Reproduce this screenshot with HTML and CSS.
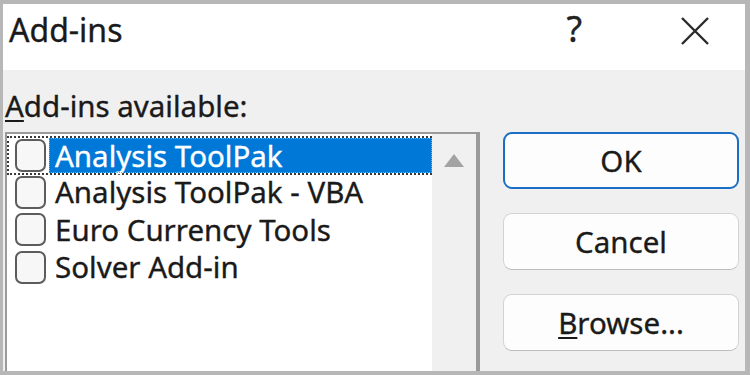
FILE: index.html
```html
<!DOCTYPE html>
<html>
<head>
<meta charset="utf-8">
<link rel="stylesheet" href="styles.css">
</head>
<body>
<div class="dialog">
  <div class="titlebar">
    <div class="title">Add-ins</div>
    <div class="help">?</div>
    <svg class="close" width="30" height="30" viewBox="0 0 30 30"><path d="M2 2 L28 28 M28 2 L2 28" stroke="#2b2b2b" stroke-width="2.4" fill="none"/></svg>
  </div>
  <div class="content">
    <div class="left">
      <div class="label"><u>A</u>dd-ins available:</div>
      <div class="listbox">
        <div class="items">
          <div class="row focused"><span class="cb"></span><span class="txt sel">Analysis ToolPak</span></div>
          <div class="row"><span class="cb"></span><span class="txt">Analysis ToolPak - VBA</span></div>
          <div class="row"><span class="cb"></span><span class="txt">Euro Currency Tools</span></div>
          <div class="row"><span class="cb"></span><span class="txt">Solver Add-in</span></div>
        </div>
        <div class="scroll">
          <svg width="22" height="15" viewBox="0 0 22 15"><polygon points="11,1 21,14 1,14" fill="#a3a3a3"/></svg>
        </div>
      </div>
    </div>
    <div class="buttons">
      <div class="btn primary">OK</div>
      <div class="btn">Cancel</div>
      <div class="btn"><u>B</u>rowse...</div>
    </div>
  </div>
</div>
</body>
</html>
```
FILE: styles.css
```css
html, body {
  margin: 0;
  padding: 0;
  width: 750px;
  height: 375px;
  overflow: hidden;
  background: #b7b7b7;
}
.dialog {
  margin: 4px 5px 0 3px;
  height: 367px;
  display: flex;
  flex-direction: column;
  font-family: "Noto Sans", "Open Sans", sans-serif;
  color: #1a1a1a;
  overflow: hidden;
  -webkit-text-stroke: 0.35px currentColor;
}
.titlebar {
  height: 66px;
  flex: none;
  background: #ffffff;
  display: flex;
  align-items: flex-start;
}
.title {
  font-size: 32px;
  line-height: 40px;
  margin: 6px 0 0 6px;
  flex: 1;
}
.help {
  font-size: 36px;
  line-height: 40px;
  margin: 5px 98px 0 0;
  color: #222;
}
.close {
  margin: 12px 35px 0 0;
}
.content {
  flex: 1;
  background: #f0f0f0;
  display: flex;
  gap: 23px;
  min-height: 0;
}
.left {
  width: 475px;
  padding-left: 2px;
  display: flex;
  flex-direction: column;
}
.label {
  font-size: 29.5px;
  line-height: 36px;
  margin-top: 18px;
  height: 44px;
  white-space: nowrap;
}
.label u, .btn u {
  text-decoration-thickness: 2px;
  text-underline-offset: 3px;
}
.listbox {
  flex: 1;
  display: flex;
  border: 2px solid #9a9a9a;
  border-right-width: 4px;
  border-bottom: none;
  background: #ffffff;
}
.items {
  width: 425px;
  padding-top: 2px;
  display: flex;
  flex-direction: column;
}
.row {
  height: 37.5px;
  flex: none;
  display: flex;
  align-items: center;
  padding-left: 8px;
  box-sizing: border-box;
}
.row.focused {
  height: 39px;
  padding-left: 6px;
  border: 2px dotted #3a3a3a;
  border-right: none;
  margin-bottom: -1.5px;
}
.cb {
  width: 27px;
  height: 29px;
  border: 2px solid #5c5c5c;
  border-radius: 7px;
  background: #f7f7f7;
  flex: none;
}
.txt {
  font-size: 29.5px;
  line-height: 34px;
  padding-left: 9px;
  white-space: nowrap;
}
.txt.sel {
  background: #0078d7;
  color: #ffffff;
  flex: 1;
  align-self: stretch;
  display: flex;
  align-items: center;
  margin-left: 3px;
  padding-left: 6px;
  outline: 1px dotted #c9a15a;
  outline-offset: -1px;
}
.scroll {
  flex: 1;
  background: #f0f0f0;
  display: flex;
  justify-content: center;
  align-items: flex-start;
  padding-top: 19px;
}
.buttons {
  width: 236px;
  display: flex;
  flex-direction: column;
  gap: 24px;
  padding-top: 62px;
}
.btn {
  height: 57px;
  box-sizing: border-box;
  border: 1px solid #d3d3d3;
  border-bottom-color: #bdbdbd;
  border-radius: 9px;
  background: #fdfdfd;
  display: flex;
  align-items: center;
  justify-content: center;
  font-size: 29.5px;
  color: #1a1a1a;
}
.btn.primary {
  border: 2px solid #1a6fc4;
}
```
